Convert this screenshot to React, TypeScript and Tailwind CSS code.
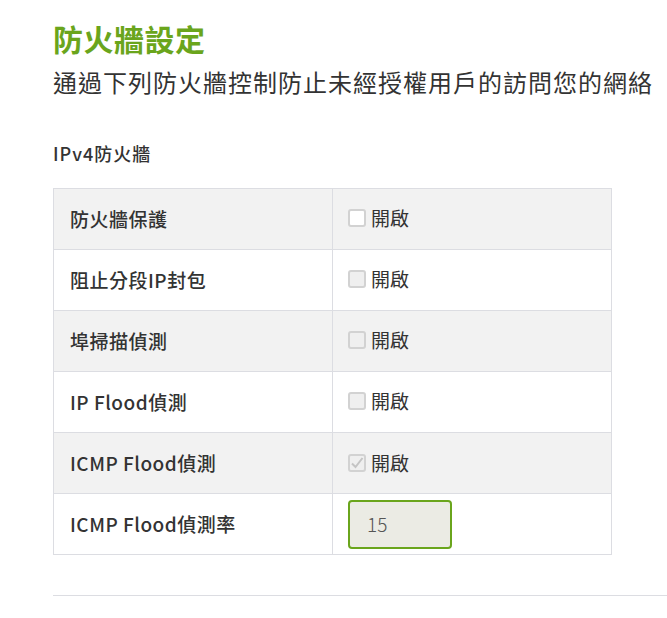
const rows: { label: string; kind: "check" | "input"; state?: string }[] = [
  { label: "防火牆保護", kind: "check", state: "enabled" },
  { label: "阻止分段IP封包", kind: "check", state: "disabled" },
  { label: "埠掃描偵測", kind: "check", state: "disabled" },
  { label: "IP Flood偵測", kind: "check", state: "disabled" },
  { label: "ICMP Flood偵測", kind: "check", state: "checked" },
  { label: "ICMP Flood偵測率", kind: "input" },
];

const CheckBox = ({ state }: { state?: string }) => {
  const disabled = state !== "enabled";
  return (
    <span
      className={
        "inline-flex items-center justify-center w-[18px] h-[18px] rounded-[3px] border-2 border-[#d2d2d2] " +
        (disabled ? "bg-[#efefef]" : "bg-white")
      }
    >
      {state === "checked" && (
        <svg width="14" height="14" viewBox="0 0 14 14">
          <path d="M2 7.5 L5.5 11 L12.5 2" fill="none" stroke="#c4c4c4" strokeWidth="2" />
        </svg>
      )}
    </span>
  );
};

export default function App() {
  return (
    <div
      className="bg-white min-h-[618px] pl-[53px] pt-[19px] text-[#333] overflow-hidden"
      style={{ fontFamily: '"Noto Sans CJK TC", "Noto Sans", sans-serif' }}
    >
      <h1 className="text-[30px] font-bold text-[#6aa51c] leading-[38px] tracking-[0.5px]">防火牆設定</h1>
      <p className="text-[24px] leading-[34px] mt-[8px] tracking-[1px] whitespace-nowrap">
        通過下列防火牆控制防止未經授權用戶的訪問您的網絡
      </p>
      <h2 className="text-[18px] font-medium leading-[24px] mt-[42px] tracking-[1px]">IPv4防火牆</h2>
      <table className="mt-[23px] w-[559px] border-collapse border border-[#dcdde2]">
        <tbody>
          {rows.map((r, i) => (
            <tr key={i} className={(i % 2 === 0 ? "bg-[#f2f2f2]" : "bg-white") + " h-[61px]"}>
              <td className="w-[279px] border border-[#dcdde2] pl-[16px] text-[19px] font-medium tracking-[0.5px]">
                {r.label}
              </td>
              <td className="border border-[#dcdde2] pl-[15px] text-[19px]">
                {r.kind === "check" ? (
                  <span className="inline-flex items-center gap-[5px]">
                    <CheckBox state={r.state} />
                    <span>開啟</span>
                  </span>
                ) : (
                  <div className="w-[104px] h-[49px] rounded-[4px] border-2 border-[#6aa51c] bg-[#ebebe4] flex items-center pl-[17px] text-[19px] font-light text-[#555]">
                    15
                  </div>
                )}
              </td>
            </tr>
          ))}
        </tbody>
      </table>
      <div className="mt-[40px] border-t border-[#dcdde2] w-[700px]" />
    </div>
  );
}
